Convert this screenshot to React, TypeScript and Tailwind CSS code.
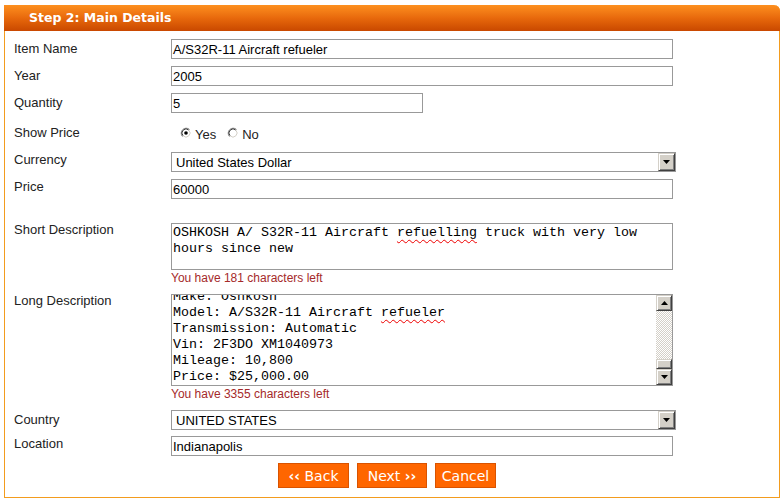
import React from "react";

function Arrow({ up }: { up?: boolean }) {
  return (
    <svg width="7" height="4" viewBox="0 0 7 4">
      {up ? <path d="M3.5 0 L7 4 L0 4 Z" fill="#000" /> : <path d="M0 0 L7 0 L3.5 4 Z" fill="#000" />}
    </svg>
  );
}

function Btn3d({ children, className }: { children?: React.ReactNode; className: string }) {
  return (
    <div
      className={
        "bg-[#d4d0c8] border border-t-[#d4d0c8] border-l-[#d4d0c8] border-r-[#404040] border-b-[#404040] shadow-[inset_1px_1px_#ffffff,inset_-1px_-1px_#808080] flex items-center justify-center " +
        className
      }
    >
      {children}
    </div>
  );
}

function Radio({ checked }: { checked?: boolean }) {
  return (
    <svg width="12" height="12" viewBox="0 0 12 12" className="shrink-0">
      <circle cx="6" cy="6" r="5" fill="#fff" />
      <path d="M2.47 9.53 A5 5 0 0 1 9.53 2.47" stroke="#808080" fill="none" />
      <path d="M3.17 8.83 A4 4 0 0 1 8.83 3.17" stroke="#404040" fill="none" />
      <path d="M8.83 3.17 A4 4 0 0 1 3.17 8.83" stroke="#d4d0c8" fill="none" />
      {checked && <circle cx="6" cy="6" r="1.8" fill="#000" />}
    </svg>
  );
}

function Row({
  label,
  rowClass,
  labelClass,
  children,
}: {
  label: string;
  rowClass: string;
  labelClass: string;
  children: React.ReactNode;
}) {
  return (
    <div className={"flex items-start " + rowClass}>
      <div className={"w-[157px] shrink-0 text-[#222] " + labelClass}>{label}</div>
      <div className="flex flex-col">{children}</div>
    </div>
  );
}

function Input({ value, w }: { value: string; w: string }) {
  return (
    <div className={"h-[20px] border border-[#999] bg-white pl-[1px] leading-[19px] text-black whitespace-nowrap overflow-hidden " + w}>
      {value}
    </div>
  );
}

function Select({ value }: { value: string }) {
  return (
    <div className="w-[505px] h-[20px] border border-[#999] bg-white flex">
      <div className="flex-1 pl-[4px] leading-[19px] text-black">{value}</div>
      <Btn3d className="w-[17px] h-[18px]">
        <Arrow />
      </Btn3d>
    </div>
  );
}

const mono = "font-['Liberation_Mono','Courier_New',monospace] text-[13.33px] leading-[16px] text-black";
const spell = "underline decoration-wavy decoration-[#e00] decoration-1 underline-offset-[3px]";

export default function App() {
  return (
    <div className="w-[782px] h-[500px] bg-white pt-[5px] pl-[4px] font-['Liberation_Sans',Arial,sans-serif] text-[13px]">
      <div className="w-[776px] h-[493px] border-x border-b border-[#f39c1e] rounded-tr-[6px] flex flex-col">
        <div className="h-[26px] -mx-px bg-gradient-to-b from-[#fd8f1e] via-[#e8690c] to-[#c94800] rounded-tr-[6px] flex items-center pl-[25px]">
          <span className="font-['DejaVu_Sans',Verdana,sans-serif] font-bold text-[12.5px] text-white">Step 2: Main Details</span>
        </div>

        <div className="pl-[9px] flex flex-col">
          <Row label="Item Name" rowClass="mt-[8px]" labelClass="leading-[20px]">
            <Input value="A/S32R-11 Aircraft refueler" w="w-[502px]" />
          </Row>
          <Row label="Year" rowClass="mt-[7px]" labelClass="leading-[20px]">
            <Input value="2005" w="w-[502px]" />
          </Row>
          <Row label="Quantity" rowClass="mt-[7px]" labelClass="leading-[20px]">
            <Input value="5" w="w-[252px]" />
          </Row>
          <Row label="Show Price" rowClass="mt-[10px]" labelClass="leading-[20px]">
            <div className="h-[20px] flex items-center pl-[9px] text-[#222]">
              <Radio checked />
              <span className="ml-[3px] mt-[3px]">Yes</span>
              <span className="ml-[11px]">
                <Radio />
              </span>
              <span className="ml-[3px] mt-[3px]">No</span>
            </div>
          </Row>
          <Row label="Currency" rowClass="mt-[9px]" labelClass="leading-[16px]">
            <Select value="United States Dollar" />
          </Row>
          <Row label="Price" rowClass="mt-[7px]" labelClass="leading-[16px]">
            <Input value="60000" w="w-[502px]" />
          </Row>
          <Row label="Short Description" rowClass="mt-[24px]" labelClass="leading-[14px]">
            <div className="w-[502px] h-[47px] border border-[#999] bg-white pl-[1px] overflow-hidden">
              <div className={mono + " whitespace-pre mt-[1px]"}>
                {"OSHKOSH A/ S32R-11 Aircraft "}
                <span className={spell}>refuelling</span>
                {" truck with very low\nhours since new"}
              </div>
            </div>
            <div className="h-[16px] leading-[17px] text-[12px] text-[#a52a2a]">You have 181 characters left</div>
          </Row>
          <Row label="Long Description" rowClass="mt-[8px]" labelClass="leading-[14px]">
            <div className="w-[502px] h-[92px] border border-[#999] bg-white flex overflow-hidden">
              <div className="flex-1 pl-[1px] overflow-hidden">
                <div className={mono + " whitespace-pre -mt-[6px]"}>
                  {"Make: Oshkosh\nModel: A/S32R-11 Aircraft "}
                  <span className={spell}>refueler</span>
                  {"\nTransmission: Automatic\nVin: 2F3DO XM1040973\nMileage: 10,800\nPrice: $25,000.00"}
                </div>
              </div>
              <div className="w-[16px] h-full flex flex-col">
                <Btn3d className="w-[16px] h-[16px] shrink-0">
                  <Arrow up />
                </Btn3d>
                <div className="flex-1 bg-[image:repeating-conic-gradient(#ffffff_0_25%,#d4d0c8_0_50%)] bg-[length:2px_2px]" />
                <Btn3d className="w-[16px] h-[10px] shrink-0" />
                <Btn3d className="w-[16px] h-[16px] shrink-0">
                  <Arrow />
                </Btn3d>
              </div>
            </div>
            <div className="h-[16px] leading-[17px] text-[12px] text-[#a52a2a]">You have 3355 characters left</div>
          </Row>
          <Row label="Country" rowClass="mt-[8px]" labelClass="leading-[20px]">
            <Select value="UNITED STATES" />
          </Row>
          <Row label="Location" rowClass="mt-[6px]" labelClass="leading-[16px]">
            <Input value="Indianapolis" w="w-[502px]" />
          </Row>

          <div className="mt-[7px] flex gap-[8px] pl-[264px] font-['DejaVu_Sans',Verdana,sans-serif] text-[14px] text-white">
            <div className="w-[71px] h-[25px] bg-[#ff6600] border border-[#d95300] flex items-center justify-center pt-[1px]">
              <span className="font-bold">‹‹</span>&nbsp;Back
            </div>
            <div className="w-[70px] h-[25px] bg-[#ff6600] border border-[#d95300] flex items-center justify-center pt-[1px]">
              Next&nbsp;<span className="font-bold">››</span>
            </div>
            <div className="w-[61px] h-[25px] bg-[#ff6600] border border-[#d95300] flex items-center justify-center pt-[1px]">Cancel</div>
          </div>
        </div>
      </div>
    </div>
  );
}
